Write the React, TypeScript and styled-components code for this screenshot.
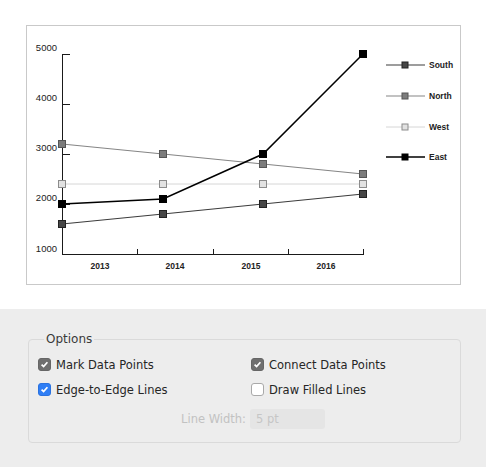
import styled, { createGlobalStyle } from "styled-components";

const GlobalStyle = createGlobalStyle`
  html, body {
    margin: 0;
    padding: 0;
    background: #fff;
  }
  * {
    box-sizing: border-box;
  }
`;

type Series = {
  name: string;
  line: string;
  width: number;
  fill: string;
  stroke: string;
  ys: number[];
};

// pixel columns of the four years, page coordinates
const XS = [62, 163, 263, 363];

const SERIES: Series[] = [
  { name: "West", line: "#d6d6d6", width: 1, fill: "#e2e2e2", stroke: "#8c8c8c", ys: [184, 184, 184, 184] },
  { name: "North", line: "#858585", width: 1.2, fill: "#7c7c7c", stroke: "#555", ys: [144, 154, 164, 174] },
  { name: "South", line: "#3c3c3c", width: 1.2, fill: "#464646", stroke: "#222", ys: [224, 214, 204, 194] },
  { name: "East", line: "#000", width: 1.5, fill: "#000", stroke: "#000", ys: [204, 199, 154, 54] },
];

const LEGEND = ["South", "North", "West", "East"];
const LEGEND_Y = [65, 96, 127, 157];

const Page = styled.div`
  width: 486px;
  height: 467px;
  display: flex;
  flex-direction: column;
  font-family: "DejaVu Sans", "Liberation Sans", sans-serif;
`;

const ChartArea = styled.div`
  height: 309px;
  padding: 25px 0 0 26px;
  background: #fff;
`;

const ChartCard = styled.div`
  width: 435px;
  height: 260px;
  border: 1px solid #c9c9c9;
  background: #fff;
`;

const ChartSvg = styled.svg`
  display: block;
  font-family: "Liberation Sans", Arial, sans-serif;
`;

const Panel = styled.div`
  flex: 1;
  background: #ededed;
  padding: 23px 0 0 28px;
`;

const Fieldset = styled.fieldset`
  width: 433px;
  margin: 0;
  padding: 5px 0 15px 9px;
  border: 1px solid #dadada;
  border-radius: 4px;
`;

const Legend = styled.legend`
  margin-left: 6px;
  padding: 0 2px;
  font-size: 12px;
  line-height: 15px;
  color: #3a3a3a;
`;

const Grid = styled.div`
  display: grid;
  grid-template-columns: 213px 1fr;
  grid-auto-rows: 25px;
`;

const Option = styled.label`
  display: flex;
  align-items: center;
  gap: 5px;
  font-size: 11.5px;
  color: #262626;
  white-space: nowrap;
`;

const Box = styled.span<{ $state: "gray" | "blue" | "off" }>`
  width: 13px;
  height: 13px;
  border-radius: 3px;
  display: flex;
  align-items: center;
  justify-content: center;
  background: ${({ $state }) =>
    $state === "gray" ? "#6f6f6f" : $state === "blue" ? "#2f7ef5" : "#fff"};
  border: 1px solid
    ${({ $state }) =>
      $state === "gray" ? "#666" : $state === "blue" ? "#2a72e0" : "#a9a9a9"};
`;

const WidthRow = styled.div`
  grid-column: 1 / 3;
  display: grid;
  grid-template-columns: 213px 1fr;
  align-items: center;
  margin-top: 7px;
  height: 20px;
`;

const WidthLabel = styled.span`
  justify-self: end;
  margin-right: 5px;
  font-size: 11.5px;
  color: #c2c2c2;
`;

const WidthInput = styled.div`
  width: 75px;
  height: 20px;
  margin-left: -1px;
  padding-left: 6px;
  border-radius: 3px;
  background: #e5e5e5;
  font-size: 11.5px;
  line-height: 20px;
  color: #c6c6c6;
`;

function Check({ state }: { state: "gray" | "blue" | "off" }) {
  return (
    <Box $state={state}>
      {state !== "off" && (
        <svg width="9" height="9" viewBox="0 0 9 9">
          <path d="M1.6 4.6 L3.6 6.6 L7.4 2.2" fill="none" stroke="#fff" strokeWidth="1.7" />
        </svg>
      )}
    </Box>
  );
}

function Chart() {
  const yTicks = [54, 104, 154, 204];
  const yLabels = [
    { t: "5000", y: 50.5 },
    { t: "4000", y: 100.5 },
    { t: "3000", y: 150.5 },
    { t: "2000", y: 200.5 },
    { t: "1000", y: 252 },
  ];
  const xTicks = [137.5, 213.5, 288.5, 363.5];
  const xLabels = [
    { t: "2013", x: 100 },
    { t: "2014", x: 175 },
    { t: "2015", x: 251 },
    { t: "2016", x: 326 },
  ];
  return (
    <ChartSvg width="433" height="258" viewBox="27 26 433 258">
      {/* axes */}
      <line x1="62.5" y1="54" x2="62.5" y2="255" stroke="#1a1a1a" />
      <line x1="62" y1="254.5" x2="364" y2="254.5" stroke="#1a1a1a" />
      {yTicks.map((y) => (
        <line key={y} x1="62" y1={y + 0.5} x2="70" y2={y + 0.5} stroke="#1a1a1a" />
      ))}
      {xTicks.map((x) => (
        <line key={x} x1={x} y1="249" x2={x} y2="254" stroke="#1a1a1a" />
      ))}
      {yLabels.map((l) => (
        <text key={l.t} x="57" y={l.y} fontSize="9.5" textAnchor="end" fill="#222">
          {l.t}
        </text>
      ))}
      {xLabels.map((l) => (
        <text key={l.t} x={l.x} y="269" fontSize="8.5" fontWeight="700" textAnchor="middle" fill="#222">
          {l.t}
        </text>
      ))}

      {/* series */}
      {SERIES.map((s) => (
        <g key={s.name}>
          <polyline
            points={s.ys.map((y, i) => `${XS[i]},${y}`).join(" ")}
            fill="none"
            stroke={s.line}
            strokeWidth={s.width}
          />
          {s.ys.map((y, i) => (
            <rect
              key={i}
              x={XS[i] - 3.5}
              y={y - 3.5}
              width="7"
              height="7"
              fill={s.fill}
              stroke={s.stroke}
              strokeWidth="1"
            />
          ))}
        </g>
      ))}

      {/* legend */}
      {LEGEND.map((name, i) => {
        const s = SERIES.find((x) => x.name === name)!;
        const y = LEGEND_Y[i];
        return (
          <g key={name}>
            <line x1="386" y1={y} x2="425" y2={y} stroke={s.line} strokeWidth={s.width} />
            <rect x="402" y={y - 3} width="6" height="6" fill={s.fill} stroke={s.stroke} />
            <text x="429" y={y + 3} fontSize="8.5" fontWeight="700" fill="#222">
              {name}
            </text>
          </g>
        );
      })}
    </ChartSvg>
  );
}

export default function App() {
  return (
    <Page>
      <GlobalStyle />
      <ChartArea>
        <ChartCard>
          <Chart />
        </ChartCard>
      </ChartArea>
      <Panel>
        <Fieldset>
          <Legend>Options</Legend>
          <Grid>
            <Option>
              <Check state="gray" />
              Mark Data Points
            </Option>
            <Option>
              <Check state="gray" />
              Connect Data Points
            </Option>
            <Option>
              <Check state="blue" />
              Edge-to-Edge Lines
            </Option>
            <Option>
              <Check state="off" />
              Draw Filled Lines
            </Option>
            <WidthRow>
              <WidthLabel>Line Width:</WidthLabel>
              <WidthInput>5 pt</WidthInput>
            </WidthRow>
          </Grid>
        </Fieldset>
      </Panel>
    </Page>
  );
}
